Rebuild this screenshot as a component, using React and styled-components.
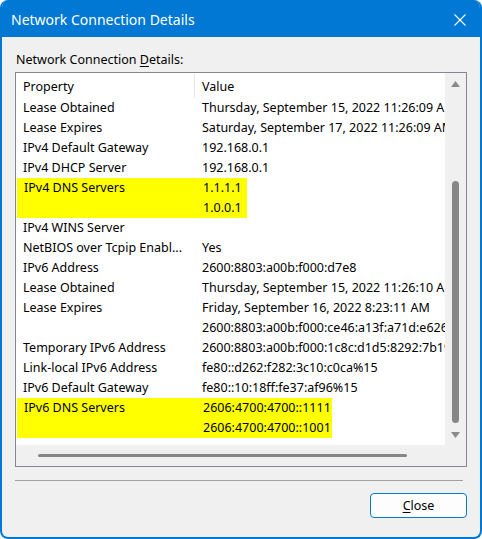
import React from 'react';
import styled, { createGlobalStyle } from 'styled-components';

const rows = [
  { group: 'plain', items: [
    ['Lease Obtained', 'Thursday, September 15, 2022 11:26:09 AM'],
    ['Lease Expires', 'Saturday, September 17, 2022 11:26:09 AM'],
    ['IPv4 Default Gateway', '192.168.0.1'],
    ['IPv4 DHCP Server', '192.168.0.1'],
  ] },
  { group: 'mark', width: 230, items: [
    ['IPv4 DNS Servers', '1.1.1.1'],
    ['', '1.0.0.1'],
  ] },
  { group: 'plain', items: [
    ['IPv4 WINS Server', ''],
    ['NetBIOS over Tcpip Enabl...', 'Yes'],
    ['IPv6 Address', '2600:8803:a00b:f000:d7e8'],
    ['Lease Obtained', 'Thursday, September 15, 2022 11:26:10 AM'],
    ['Lease Expires', 'Friday, September 16, 2022 8:23:11 AM'],
    ['', '2600:8803:a00b:f000:ce46:a13f:a71d:e626'],
    ['Temporary IPv6 Address', '2600:8803:a00b:f000:1c8c:d1d5:8292:7b19'],
    ['Link-local IPv6 Address', 'fe80::d262:f282:3c10:c0ca%15'],
    ['IPv6 Default Gateway', 'fe80::10:18ff:fe37:af96%15'],
  ] },
  { group: 'mark', width: 315, items: [
    ['IPv6 DNS Servers', '2606:4700:4700::1111'],
    ['', '2606:4700:4700::1001'],
  ] },
];

const App = () => (
  <>
    <GlobalStyle />
    <Window>
      <TitleBar>
        <Title>Network Connection Details</Title>
        <CloseX>
          <svg width="12" height="12" viewBox="0 0 12 12">
            <path d="M0.5 0.5 L11.5 11.5 M11.5 0.5 L0.5 11.5" stroke="#fff" strokeWidth="1.1" />
          </svg>
        </CloseX>
      </TitleBar>
      <Body>
        <Label>
          Network Connection <u>D</u>etails:
        </Label>
        <ListBox>
          <ListArea>
            <HeaderRow>
              <HeadCell divider>Property</HeadCell>
              <HeadCell>Value</HeadCell>
            </HeaderRow>
            {rows.map((g, gi) => (
              <Group key={gi} $mark={g.group === 'mark'} $width={g.width}>
                {g.items.map(([p, v], i) => (
                  <Row key={i}>
                    <Cell>{p}</Cell>
                    <Cell>{v}</Cell>
                  </Row>
                ))}
              </Group>
            ))}
          </ListArea>
          <VScroll>
            <ArrowBtn>
              <svg width="9" height="6" viewBox="0 0 9 6"><path d="M4.5 0 L9 6 L0 6 Z" fill="#8a8a8a" /></svg>
            </ArrowBtn>
            <VTrack>
              <VThumb />
            </VTrack>
            <ArrowBtn>
              <svg width="9" height="6" viewBox="0 0 9 6"><path d="M0 0 L9 0 L4.5 6 Z" fill="#8a8a8a" /></svg>
            </ArrowBtn>
          </VScroll>
          <HScroll>
            <HThumb />
          </HScroll>
          <Corner />
        </ListBox>
        <Separator />
        <Footer>
          <Button>
            <u>C</u>lose
          </Button>
        </Footer>
      </Body>
    </Window>
  </>
);

export default App;

const GlobalStyle = createGlobalStyle`
  html, body {
    margin: 0;
    padding: 0;
    background: #ffffff;
  }
  body {
    font-family: "Noto Sans", "Open Sans", sans-serif;
    color: #000;
  }
`;

const Window = styled.div`
  width: 482px;
  height: 539px;
  box-sizing: border-box;
  background: #f0f0f0;
  border: 2px solid #0078d4;
  border-top: none;
  border-radius: 8px;
  overflow: hidden;
  display: flex;
  flex-direction: column;
`;

const TitleBar = styled.div`
  height: 37px;
  flex: none;
  background: #0078d4;
  display: flex;
  align-items: center;
  justify-content: space-between;
  padding: 0 14px 0 9px;
`;

const Title = styled.div`
  color: #fff;
  font-size: 14px;
  margin-top: 1px;
`;

const CloseX = styled.div`
  display: flex;
  margin-top: 2px;
`;

const Body = styled.div`
  flex: 1;
  display: flex;
  flex-direction: column;
  padding: 15px 13px 0 13px;
`;

const Label = styled.div`
  font-size: 12.5px;
  line-height: 16px;
  margin-left: 1px;
  u {
    text-decoration-thickness: 1px;
    text-underline-offset: 2px;
  }
`;

// list view with both scrollbars
const ListBox = styled.div`
  margin-top: 4px;
  height: 395px;
  box-sizing: border-box;
  border: 1px solid #828790;
  display: grid;
  grid-template-columns: 1fr 21px;
  grid-template-rows: 1fr 21px;
  background: #f0f0f0;
`;

const ListArea = styled.div`
  background: #fff;
  overflow: hidden;
  font-size: 12.5px;
`;

const HeaderRow = styled.div`
  display: grid;
  grid-template-columns: 179px 1fr;
  height: 25px;
`;

const HeadCell = styled.div`
  padding-left: 7px;
  display: flex;
  align-items: center;
  margin-top: 1px;
  border-right: ${(p) => (p.divider ? '1px solid #e5e5e5' : 'none')};
`;

const Group = styled.div`
  width: ${(p) => (p.$width ? `${p.$width}px` : 'auto')};
  margin-left: ${(p) => (p.$mark ? '1px' : '0')};
  background: ${(p) => (p.$mark ? '#ffff00' : 'transparent')};
  overflow: visible;
`;

const Row = styled.div`
  display: grid;
  grid-template-columns: 179px 1fr;
  height: 20px;
  width: 429px;
`;

const Cell = styled.div`
  padding-left: 7px;
  white-space: nowrap;
  overflow: hidden;
  line-height: 20px;
`;

const VScroll = styled.div`
  display: flex;
  flex-direction: column;
  align-items: center;
`;

const ArrowBtn = styled.div`
  height: 21px;
  display: flex;
  align-items: center;
  justify-content: center;
`;

const VTrack = styled.div`
  flex: 1;
  padding-top: 87px;
`;

const VThumb = styled.div`
  width: 7px;
  height: 242px;
  background: #878787;
  border-radius: 4px;
`;

const HScroll = styled.div`
  display: flex;
  align-items: center;
  padding-left: 22px;
`;

const HThumb = styled.div`
  width: 369px;
  height: 3px;
  background: #878787;
  border-radius: 2px;
`;

const Corner = styled.div``;

const Separator = styled.div`
  height: 1px;
  margin: 13px 4px 0 0;
  background: #a0a0a0;
`;

const Footer = styled.div`
  display: flex;
  justify-content: flex-end;
  padding-top: 12px;
`;

const Button = styled.button`
  width: 97px;
  height: 25px;
  box-sizing: border-box;
  background: #fdfdfd;
  border: 1px solid #0078d4;
  border-radius: 4px;
  font-family: "Noto Sans", "Open Sans", sans-serif;
  font-size: 12.5px;
  color: #000;
  padding: 0;
  u {
    text-decoration-thickness: 1px;
    text-underline-offset: 2px;
  }
`;
